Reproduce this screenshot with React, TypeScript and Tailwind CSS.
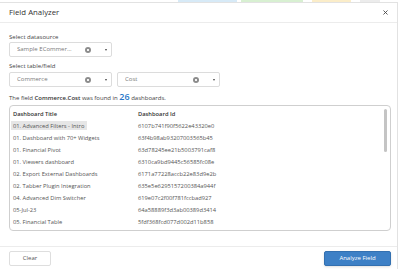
import { X } from 'lucide-react'

const rows: [string, string][] = [
  ['01. Advanced Filters - Intro', '6107b741f90f5622e43320e0'],
  ['01. Dashboard with 70+ Widgets', '63f4b98ab93207003565b45'],
  ['01. Financial Pivot', '63d78245ee21b5003791caf8'],
  ['01. Viewers dashboard', '6310ca9bd9445c56585fc08e'],
  ['02. Export External Dashboards', '6171a77228accb22e83d9e2b'],
  ['02. Tabber Plugin Integration', '635e5e6295157200384a944f'],
  ['04. Advanced Dim Switcher', '619e07c2f00f781fccbad927'],
  ['05-Jul-23', '64a58889f3d3ab00389d3414'],
  ['05. Financial Table', '5fdf368fcd077d002d11b858'],
]

function ClearIcon() {
  return (
    <span className="w-[6px] h-[6px] rounded-full bg-[#8c8c8c] flex items-center justify-center">
      <svg width="4" height="4" viewBox="0 0 4 4">
        <path d="M1 1 L3 3 M3 1 L1 3" stroke="white" strokeWidth="0.9" />
      </svg>
    </span>
  )
}

function Select({ value }: { value: string }) {
  return (
    <div className="w-[103px] h-[15px] border border-[#dcdcdc] rounded-[2px] bg-white flex items-center pl-[7px] pr-[4px]">
      <span className="flex-1 text-[6px] text-[#7a7a7a] truncate">{value}</span>
      <ClearIcon />
      <span className="ml-[14px] w-0 h-0 border-l-[1.5px] border-r-[1.5px] border-t-[2px] border-l-transparent border-r-transparent border-t-[#444]" />
    </div>
  )
}

export default function App() {
  return (
    <div className="w-[399px] h-[269px] overflow-hidden bg-white font-['Open_Sans',sans-serif] text-[#333]">
      <div className="h-[2px] flex">
        <div className="w-[178px]" />
        <div className="w-[59px] bg-[#d7eaf7]" />
        <div className="w-[4px]" />
        <div className="w-[62px] bg-[#d8f0d2]" />
        <div className="w-[9px]" />
        <div className="w-[39px] bg-[#fbedc9]" />
        <div className="w-[9px]" />
        <div className="w-[20px] bg-[#ececec]" />
      </div>
      <div className="w-[398px] h-[267px] border-t border-r border-[#e2e2e2] flex flex-col">
        <div className="h-[20px] border-b border-[#ececec] flex items-center justify-between pl-[9px] pr-[8px]">
          <span className="text-[7.8px] leading-none text-[#333]">Field Analyzer</span>
          <X size={7} strokeWidth={3} className="text-[#444]" />
        </div>
        <div className="pl-[9px] pr-[6px] pt-[10px] pb-[15px] border-b border-[#ececec]">
          <div className="text-[6px] leading-[8px] text-[#444]">Select datasource</div>
          <div className="mt-[1px]">
            <Select value="Sample ECommer..." />
          </div>
          <div className="mt-[5px] text-[6px] leading-[8px] text-[#444]">Select table/field</div>
          <div className="mt-[2px] flex gap-[5px]">
            <Select value="Commerce" />
            <Select value="Cost" />
          </div>
          <div className="mt-[5px] h-[10px] flex items-baseline text-[6px] text-[#444] whitespace-pre">
            <span>The field </span>
            <span className="font-semibold text-[#333]">Commerce.Cost</span>
            <span> was found in </span>
            <span className="text-[9px] font-semibold text-[#2a78c8] leading-none">26</span>
            <span> dashboards.</span>
          </div>
          <div className="mt-[3px] h-[126px] border border-[#cfcfcf] rounded-[4px] flex overflow-hidden">
            <div className="flex-1 pt-[2px] pl-[3px]">
              <div className="grid grid-cols-[125px_1fr] h-[12px] items-center text-[5.75px] font-semibold text-[#333]">
                <span>Dashboard Title</span>
                <span>Dashboard Id</span>
              </div>
              {rows.map(([title, id], i) => (
                <div key={id} className="grid grid-cols-[125px_1fr] h-[12px] items-center text-[5.75px] text-[#555]">
                  <span>
                    {i === 0 ? (
                      <span className="-ml-[2.5px] px-[2.5px] py-[0.5px] bg-[#e6e6e6]">{title}</span>
                    ) : (
                      title
                    )}
                  </span>
                  <span>{id}</span>
                </div>
              ))}
            </div>
            <div className="w-[3px] mr-[3px] pt-[3px]">
              <div className="h-[43px] rounded-full bg-[#c4c4c4]" />
            </div>
          </div>
        </div>
        <div className="pl-[9px] pr-[6px] pt-[4px] flex justify-between">
          <button className="w-[42px] h-[15px] border border-[#dedede] rounded-[2px] bg-white text-[6px] text-[#555]">
            Clear
          </button>
          <button className="w-[67px] h-[15px] border border-[#3370b0] rounded-[2px] bg-[#3d80c6] text-[6px] text-white shadow-sm">
            Analyze Field
          </button>
        </div>
      </div>
    </div>
  )
}
